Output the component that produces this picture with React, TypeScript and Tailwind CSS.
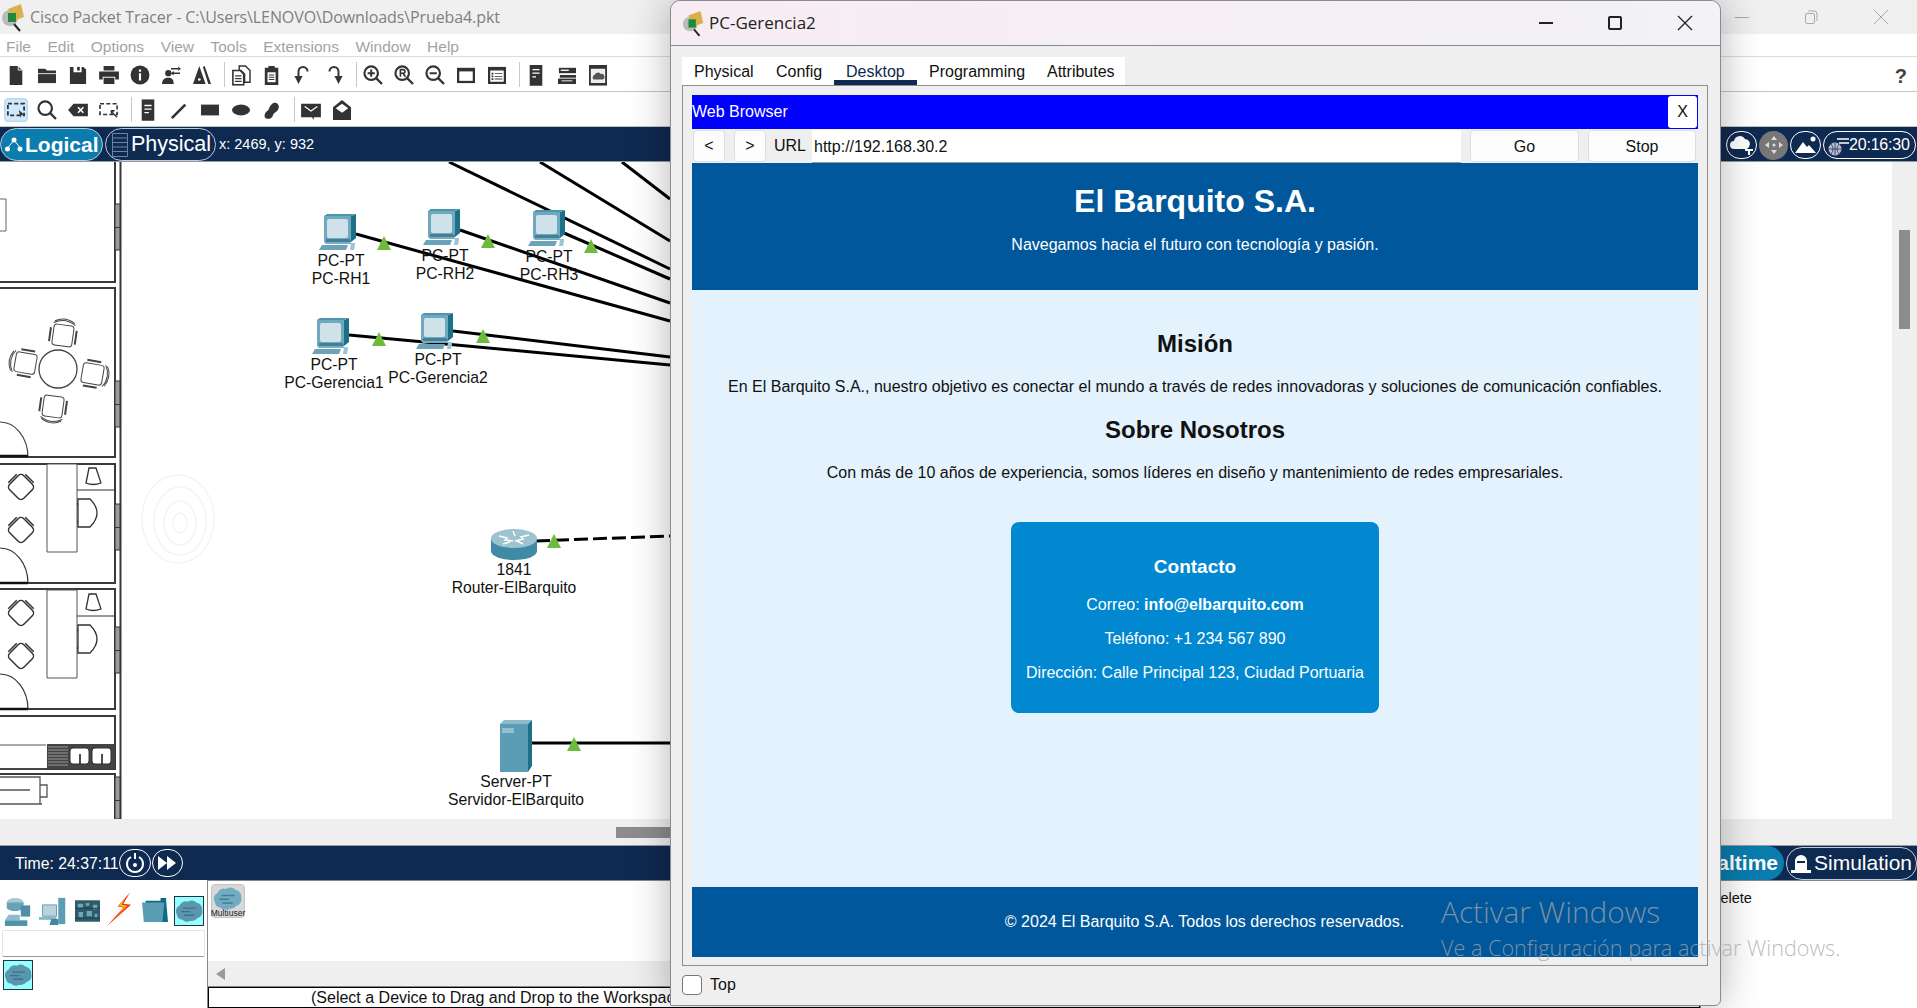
import React from "react";

const D = "#333333";

function Ic({ children, w = 24, h = 24, vb = "0 0 24 24" }: { children: React.ReactNode; w?: number; h?: number; vb?: string }) {
  return (
    <svg width={w} height={h} viewBox={vb} fill={D} className="block">
      {children}
    </svg>
  );
}

const Zoom = ({ inner }: { inner: React.ReactNode }) => (
  <Ic>
    <circle cx="10" cy="10" r="7.5" fill="none" stroke={D} strokeWidth="2.4" />
    <path d="M15.5 15.5 22 22" stroke={D} strokeWidth="2.6" fill="none" />
    {inner}
  </Ic>
);

const toolbar1: React.ReactNode[] = [
  <Ic key="a"><path d="M5 2h9l5 5v16H5z" /><path d="M14.5 2v4.5H19" fill="none" stroke="#fff" strokeWidth="1" /></Ic>,
  <Ic key="b"><path d="M2 5h8l2 2h10v3H2z" /><path d="M2 11h20v10H2z" /></Ic>,
  <Ic key="c"><path d="M3 3h4v6h9V3h2l3 3v16H3z" /><path d="M11 3h3v4h-3z" /></Ic>,
  <Ic key="d"><path d="M6 2h12v5H6z" /><path d="M1 8h22v9h-4v-3H5v3H1z" /><path d="M6 15h12v7H6z" /></Ic>,
  <Ic key="e"><circle cx="12" cy="12" r="10.5" /><path d="M10.8 10h2.4v8h-2.4zM10.8 6h2.4v2.4h-2.4z" fill="#fff" /></Ic>,
  <Ic key="f"><circle cx="9" cy="10" r="3.5" /><path d="M2 22c0-5 3-7 7-7s6 2 6 7z" /><path d="M12 5h8M13 10h9" stroke={D} strokeWidth="1.6" /><path d="M20 2.500 23 5l-3 2.500zM15 7.500 12 10l3 2.500z" /></Ic>,
  <Ic key="g"><path d="M9 2l7 20H2z" /><path d="M13 3l2-1 7 20h-3z" /><circle cx="9" cy="17" r="1.500" fill="#fff" /></Ic>,
  "sep",
  <Ic key="h"><path d="M10 2h7l5 5v13h-6v-9l-4-4h-2z" fill="none" stroke={D} strokeWidth="1.600" /><path d="M3 7h8l4 4v12H3z" fill="#fff" stroke={D} strokeWidth="1.800" /><path d="M5.500 13h7M5.500 16h7M5.500 19h7" stroke={D} strokeWidth="1.400" /></Ic>,
  <Ic key="i"><path d="M4 4h4V2h7v2h4v19H4z" /><path d="M7 9h9v11H7z" fill="#fff" /><path d="M8.500 12h6M8.500 14.500h6M8.500 17h6" stroke={D} strokeWidth="1.300" /></Ic>,
  <Ic key="j"><path d="M7 14V8a5 5 0 0 1 10 0" fill="none" stroke={D} strokeWidth="2.200" /><path d="M2.500 13h9L7 22z" /></Ic>,
  <Ic key="k"><path d="M17 14V8A5 5 0 0 0 7 8" fill="none" stroke={D} strokeWidth="2.200" /><path d="M12.500 13h9L17 22z" /></Ic>,
  "sep",
  <Zoom key="l" inner={<path d="M6 10h8M10 6v8" stroke={D} strokeWidth="2.200" />} />,
  <Zoom key="m" inner={<path d="M8 14V6h3a2 2 0 0 1 0 4H8m3 0 2.500 4" fill="none" stroke={D} strokeWidth="1.800" />} />,
  <Zoom key="n" inner={<path d="M6 10h8" stroke={D} strokeWidth="2.200" />} />,
  <Ic key="o"><path d="M2 4h20v17H2z" /><path d="M4.500 8h15v10.500h-15z" fill="#fff" /></Ic>,
  <Ic key="p"><path d="M2 3h20v19H2z" /><path d="M4.500 7h15v12.500h-15z" fill="#fff" /><path d="M6 9.500h2v2H6zM6 12.500h2v2H6zM6 15.500h2v2H6zM9.500 10h8.500v1H9.500zM9.500 13h8.500v1H9.500zM9.500 16h8.500v1H9.500z" /></Ic>,
  "sep",
  <Ic key="q"><path d="M5 1h14v24H5z" /><path d="M8 6h8M8 10h8M8 14h4" stroke="#fff" strokeWidth="1.400" /></Ic>,
  <Ic key="r"><path d="M3 4h19v6H3z" /><path d="M5 6h9v1.500H5z" fill="#fff" /><path d="M4 12h18v3H4z" /><path d="M2 16h20v6H2z" /><path d="M6 18h12v1H6z" fill="#fff" /></Ic>,
  <Ic key="s"><path d="M2 1h20v23H2z" /><path d="M4 5h16v16H4z" fill="#eee" /><path d="M7 17a3 3 0 0 1 1-5 4 4 0 0 1 7-1 3 3 0 0 1 2 6z" fill="#555" /></Ic>,
];

const toolbar2: React.ReactNode[] = [
  <Ic key="a"><path d="M3 5h18v13H3z" fill="none" stroke={D} strokeWidth="2" strokeDasharray="4.500 2.500" /><path d="M15 12l6 5-3 .5-1 3z" /></Ic>,
  <Zoom key="b" inner={null} />,
  <Ic key="c"><path d="M7 5h16v14H7L1 12z" /><path d="M12 9l6 6M18 9l-6 6" stroke="#fff" strokeWidth="1.800" /></Ic>,
  <Ic key="d"><path d="M2 5h19v12H2z" fill="none" stroke={D} strokeWidth="1.800" strokeDasharray="4.500 2.500" /><path d="M14 13l7 7" stroke={D} strokeWidth="1.600" /><path d="M14 12h5l-5 5z" /></Ic>,
  "sep",
  <Ic key="e"><path d="M5 0h14v25H5z" /><path d="M8 7h8M8 11h8M8 15h5" stroke="#fff" strokeWidth="1.400" /></Ic>,
  <Ic key="f"><path d="M4 21 19 6" stroke={D} strokeWidth="3" fill="none" /></Ic>,
  <Ic key="g"><path d="M2 6h20v12H2z" /></Ic>,
  <Ic key="h"><ellipse cx="12" cy="12" rx="10" ry="6" /></Ic>,
  <Ic key="i"><path d="M4 20c-1-3 1-6 4-8 1-2 2-6 6-8 4-1 7 3 5 7-1 3-5 4-6 7-1 4-7 5-9 2z" /></Ic>,
  "sep",
  <Ic key="j"><path d="M1 5h22v15h-8v3l-2-3H1z" /><path d="M5 8l7 5 7-5" fill="none" stroke="#fff" strokeWidth="1.400" /></Ic>,
  <Ic key="k"><path d="M12 1l10 8v14H2V9z" /><path d="M5 10l7-5 7 5-7 5z" fill="#fff" /></Ic>,
];

function ToolRow({ items, h, selected }: { items: React.ReactNode[]; h: string; selected?: boolean }) {
  return (
    <div className={`flex items-center pl-[3px] pt-[1px] bg-white border-b border-[#c4c4c4] ${h}`}>
      {items.map((it, i) =>
        it === "sep" ? (
          <div key={i} className="w-px h-[25px] bg-[#c8c8c8] mx-[3.5px]" />
        ) : (
          <div
            key={i}
            className={`w-[26px] h-[26px] mr-[5px] flex items-center justify-center scale-90 ${selected && i === 0 ? "bg-[#cfe8fb] border border-[#9cc9ee] rounded-[3px]" : ""}`}
          >
            {it}
          </div>
        )
      )}
    </div>
  );
}

function Pc({ x, y }: { x: number; y: number }) {
  return (
    <svg width="37" height="36" viewBox="0 0 37 36" className="absolute" style={{ left: x, top: y }}>
      <path d="M5 2h27v26H5z" fill="#6fa9bd" />
      <path d="M32 2l5-2v24l-5 4z" fill="#1e6f88" />
      <path d="M5 2 8 0h29l-5 2z" fill="#4d93ab" />
      <rect x="8" y="5" width="21" height="19" rx="2" fill="#cfe1e9" />
      <path d="M7 25h24l1 3H7z" fill="#447f97" />
      <path d="M5 28h26l2 2H7z" fill="#77afc2" />
      <path d="M3 31h26l-2 5H0z" fill="#6ba3b8" />
      <path d="M32 29h4v2l-1 5h-4z" fill="#9cc6d4" />
    </svg>
  );
}

function Label({ cx, y, a, b }: { cx: number; y: number; a: string; b: string }) {
  return (
    <div className="absolute -translate-x-1/2 text-center text-[15.700px] leading-[18px] text-[#111] whitespace-nowrap" style={{ left: cx, top: y }}>
      <div>{a}</div>
      <div>{b}</div>
    </div>
  );
}

const Tri = ({ x, y }: { x: number; y: number }) => <path d={`M${x - 7} ${y + 14}L${x} ${y}L${x + 7} ${y + 14}Z`} fill="#6cbb3c" />;

const Chair = ({ x, y, r }: { x: number; y: number; r: number }) => (
  <g transform={`translate(${x} ${y}) rotate(${r})`} fill="none" stroke="#444" strokeWidth="1">
    <rect x="-10" y="-10" width="20" height="21" rx="3" />
    <path d="M-13 -6v14M13 -6v14" strokeWidth="2" />
    <path d="M-11 -11q11 -7 22 0M-10 -13q10 -6 20 0" strokeWidth="1" />
  </g>
);

function Office({ y }: { y: number }) {
  return (
    <g fill="none" stroke="#333" strokeWidth="1">
      <path d={`M47 ${y}h30v88H47z`} fill="#fff" stroke="#555" />
      <path d={`M77 ${y + 26}h38`} />
      {[23, 66].map((d) => (
        <g key={d} transform={`translate(21 ${y + d}) rotate(45)`}>
          <rect x="-10" y="-10" width="20" height="20" rx="4" strokeWidth="1.500" />
          <path d="M-12 -6v12M-6 -12h12" strokeWidth="1.500" />
        </g>
      ))}
      <path d={`M78 ${y + 35}h12q14 14 0 28H78z`} strokeWidth="1.300" />
      <path d={`M78 ${y + 40}h-1M78 ${y + 58}h-1`} strokeWidth="2" />
      <path d={`M86 ${y + 19}l3-15h7l5 15q-8 3-15 0z`} strokeWidth="1.300" />
      <path d={`M0 ${y + 84}A28 35 0 0 1 28 ${y + 119}`} strokeWidth="1.200" />
      <path d={`M0 ${y + 119}h28`} stroke="#111" strokeWidth="2.500" />
    </g>
  );
}

function FloorPlan() {
  return (
    <svg width="125" height="657" viewBox="0 163 125 657" className="absolute left-0 top-0">
      <g fill="none" stroke="#3a3a3a">
        <path d="M0 283h115V163" strokeWidth="2" />
        <path d="M0 289h115v169H0" strokeWidth="2" />
        <path d="M120.500 163v657" strokeWidth="2" />
        <path d="M0 200h6v32H0" strokeWidth="1" stroke="#666" />
        <path d="M0 465h115v119H0" strokeWidth="2" />
        <path d="M0 590h115v120H0" strokeWidth="2" />
        <path d="M0 717h115v53H0" strokeWidth="2" />
        <path d="M0 775h115v45" strokeWidth="2" />
      </g>
      {[205, 382, 505, 628, 778].map((y, i) => (
        <g key={i}>
          <rect x="115" y={y} width="5" height={i === 4 ? 42 : 46} fill="#9a9a9a" stroke="#333" strokeWidth="1" />
          <rect x="115" y={y + 23} width="5" height="1" fill="#333" />
        </g>
      ))}
      <circle cx="58" cy="370" r="19" fill="none" stroke="#444" strokeWidth="1.300" />
      <Chair x={63} y={336} r={8} />
      <Chair x={25} y={364} r={-80} />
      <Chair x={93} y={375} r={100} />
      <Chair x={53} y={408} r={188} />
      <path d="M0 423A28 35 0 0 1 28 458" fill="none" stroke="#444" strokeWidth="1.200" />
      <path d="M0 457h28" stroke="#111" strokeWidth="2.500" />
      <Office y={465} />
      <Office y={591} />
      <rect x="47" y="745" width="68" height="25" fill="#444" />
      <path d="M48 748h20M48 751h20M48 754h20M48 757h20M48 760h20M48 763h20M48 766h20" stroke="#999" />
      {[70, 92].map((x) => (
        <g key={x}>
          <rect x={x} y="749" width="19" height="16" rx="3" fill="#fff" stroke="#333" />
          <path d={`M${x + 10} 755v10`} stroke="#111" strokeWidth="1.500" />
        </g>
      ))}
      <path d="M0 746h46M0 770h46" stroke="#555" />
      <g fill="none" stroke="#555" strokeWidth="1.300">
        <path d="M0 778h40v27H0M0 791h30M40 786h7v12h-7M0 805h42" />
      </g>
    </svg>
  );
}

function Scene() {
  return (
    <div className="relative flex-1 bg-white overflow-hidden font-['Liberation_Sans',sans-serif]">
      <FloorPlan />
      <svg width="180" height="180" viewBox="0 0 180 180" className="absolute left-[90px] top-[267px]" fill="none" stroke="#f4f4f4" strokeWidth="1.500">
        <ellipse cx="88" cy="90" rx="36" ry="44" />
        <ellipse cx="90" cy="92" rx="26" ry="34" />
        <ellipse cx="90" cy="94" rx="16" ry="22" />
        <ellipse cx="90" cy="94" rx="7" ry="10" />
      </svg>
      <svg width="700" height="657" viewBox="0 163 700 657" className="absolute left-0 top-0" fill="none">
        <g stroke="#000" strokeWidth="3">
          <path d="M449 163 670 270" />
          <path d="M540 163 670 242" />
          <path d="M622 163 670 200" />
          <path d="M564 234 670 280" />
          <path d="M460 231 670 304" />
          <path d="M356 235 670 322" />
          <path d="M349 336 670 366" />
          <path d="M453 332 670 358" />
          <path d="M536 542 670 537" strokeDasharray="14 5" />
          <path d="M531 744H670" />
        </g>
        <Tri x={384} y={237} />
        <Tri x={488} y={235} />
        <Tri x={591} y={240} />
        <Tri x={379} y={333} />
        <Tri x={483} y={330} />
        <Tri x={554} y={535} />
        <Tri x={574} y={738} />
      </svg>
      <div className="absolute left-0 top-[-162px] w-0 h-0">
        <Pc x={319} y={214} />
        <Pc x={423} y={209} />
        <Pc x={528} y={210} />
        <Pc x={312} y={318} />
        <Pc x={416} y={313} />
        <svg width="46" height="31" viewBox="0 0 46 31" className="absolute left-[491px] top-[529px]">
          <path d="M0 9v13c0 5 10 9 23 9s23-4 23-9V9z" fill="#3f8ba5" />
          <ellipse cx="23" cy="9.500" rx="23" ry="9.500" fill="#9dc3d0" />
          <path d="M8 7l8 2-2 2 8 1M38 6l-8 2 2 2-8 2M12 15l7-2M32 15l-6-3M22 2l2 5" stroke="#fff" strokeWidth="1.500" fill="none" />
        </svg>
        <svg width="32" height="52" viewBox="0 0 32 52" className="absolute left-[500px] top-[720px]">
          <path d="M0 4h28v48H0z" fill="#5a9db5" />
          <path d="M0 4l4-4h28l-4 4z" fill="#8cbccb" />
          <path d="M28 4l4-4v46l-4 6z" fill="#1e6f88" />
          <rect x="2" y="8" width="12" height="5" fill="#93bfce" />
        </svg>
        <Label cx={341} y={252} a="PC-PT" b="PC-RH1" />
        <Label cx={445} y={247} a="PC-PT" b="PC-RH2" />
        <Label cx={549} y={248} a="PC-PT" b="PC-RH3" />
        <Label cx={334} y={356} a="PC-PT" b="PC-Gerencia1" />
        <Label cx={438} y={351} a="PC-PT" b="PC-Gerencia2" />
        <Label cx={514} y={561} a="1841" b="Router-ElBarquito" />
        <Label cx={516} y={773} a="Server-PT" b="Servidor-ElBarquito" />
      </div>
    </div>
  );
}

const Cloud = ({ w = 28, light }: { w?: number; light?: boolean }) => (
  <svg width={w} height={w * 0.8} viewBox="0 0 30 24">
    <path d="M4 6a7 7 0 0 1 9-4 8 8 0 0 1 10 1 7 7 0 0 1 6 8 7 7 0 0 1-5 9 8 8 0 0 1-8 3 8 8 0 0 1-9-1 7 7 0 0 1-6-6 7 7 0 0 1 3-10z" fill={light ? "#73abc1" : "#5c96ad"} />
    <path d="M8 9h14M6 13h10M9 17h11" stroke={light ? "#3f7f98" : "#38728a"} strokeWidth="1.500" />
  </svg>
);

function DevicePicker() {
  return (
    <div className="w-[208px] shrink-0 bg-white pt-[4px] border-r border-[#888]">
      <div className="flex items-end h-[45px] pb-[3px] pl-[4px] bg-white">
        <svg width="28" height="30" viewBox="0 0 30 32">
          <ellipse cx="12" cy="7" rx="9" ry="5" fill="#a9c9d5" />
          <path d="M3 7v6c3 4 14 4 18 0V7z" fill="#67a3b8" />
          <path d="M18 10h10v12H18z" fill="#4e90a8" />
          <path d="M5 20h12v6H1z" fill="#8ebccb" />
          <path d="M1 26h24v6H1z" fill="#4f93ab" />
        </svg>
        <svg width="28" height="30" viewBox="0 0 32 34" className="ml-[7px]">
          <path d="M22 2h8v30h-8z" fill="#5d9cb3" />
          <path d="M4 10h16v13H4z" fill="#b9d4de" stroke="#5a94aa" />
          <path d="M0 24h20v3H0z" fill="#7fb2c3" />
          <path d="M14 26h8v7H12z" fill="#3f87a0" />
        </svg>
        <svg width="25" height="24" viewBox="0 0 28 24" className="ml-[8px] mb-[3px]">
          <rect width="28" height="24" fill="#2f5a68" />
          <path d="M3 4h6v4H3zM12 3h4v3h-4zM20 5h5v5h-5zM4 13h5v6H4zM13 12h6v6h-6zM22 15h3v4h-3z" fill="#6ba7bb" />
          <path d="M0 9h28M0 20h28" stroke="#15404e" />
        </svg>
        <svg width="27" height="34" viewBox="0 0 28 35" className="ml-[7px]">
          <path d="M24 0 11 15l6 1L0 35l25-22-8-1z" fill="#f23a0e" />
          <path d="M19 6 12 14.500l6 1L9 26l12-12-6-1z" fill="#fbbf24" />
        </svg>
        <svg width="26" height="26" viewBox="0 0 28 26" className="ml-[8px] mb-[3px]">
          <path d="M4 3h16V0h6v3l2 23H2z" fill="#0f6a84" />
          <path d="M0 5h24l-2 21H2z" fill="#5a9db5" />
        </svg>
        <div className="w-[30px] h-[30px] ml-[6px] bg-[#96ffff] border border-[#234] flex items-center justify-center">
          <Cloud w={27} />
        </div>
      </div>
      <div className="h-[27px] mx-[2px] mt-[1px] bg-white border border-[#e4e4e4] border-b-[#999] rounded-[2px]" />
      <div className="w-[30px] h-[30px] mt-[3px] ml-[3px] bg-[#96ffff] border border-[#234] flex items-center justify-center">
        <Cloud w={27} />
      </div>
    </div>
  );
}

function Background() {
  return (
    <div className="w-[1917px] h-[1008px] flex flex-col bg-[#efefef] font-['Liberation_Sans',sans-serif]">
      <div className="h-[34px] shrink-0 flex items-center bg-[#f0f0f0] relative">
        <svg width="26" height="30" viewBox="0 0 26 30" className="ml-[1px]">
          <circle cx="9" cy="16" r="8" fill="#bbb" />
          <path d="M7 7l13-5 3 13-11 4z" fill="#d9b04a" />
          <path d="M7 11h8v9H7z" fill="#1e8a3c" />
          <path d="M13 22l6 7" stroke="#222" strokeWidth="2" />
        </svg>
        <span className="ml-[3px] text-[16px] text-[#7f7f7f] font-['Open_Sans',sans-serif] tracking-[-0.100px]">{"Cisco Packet Tracer - C:\\Users\\LENOVO\\Downloads\\Prueba4.pkt"}</span>
        <div className="ml-auto flex items-center text-[#a9a9a9] mr-[28px] gap-[54px] text-[20px]">
          <div className="w-[14px] h-px bg-[#a9a9a9]" />
          <svg width="16" height="16" viewBox="0 0 16 16" fill="none" stroke="#a9a9a9"><rect x="2.500" y="4.500" width="9" height="10" rx="1.500" /><path d="M5 2h6a3 3 0 0 1 3 3v7" /></svg>
          <svg width="16" height="16" viewBox="0 0 16 16" stroke="#a9a9a9"><path d="M1 1l14 14M15 1 1 15" /></svg>
        </div>
      </div>
      <div className="h-[23px] shrink-0 flex items-center bg-white pl-[6px] pt-[3px] gap-[16.500px] text-[15.500px] text-[#a3a3a3] border-b border-[#dcdcdc]">
        {["File", "Edit", "Options", "View", "Tools", "Extensions", "Window", "Help"].map((m) => (
          <span key={m}>{m}</span>
        ))}
      </div>
      <div className="relative shrink-0">
        <ToolRow items={toolbar1} h="h-[35px]" />
        <span className="absolute right-[10px] top-[4px] text-[20px] font-bold text-[#444]">?</span>
      </div>
      <ToolRow items={toolbar2} h="h-[36px]" selected />
      <div className="h-[35px] shrink-0 flex items-center pt-[1px] bg-[#0f2a50] text-white border-b border-[#999] relative">
        <div className="h-[33px] w-[103px] rounded-[17px] bg-[#0a7cae] border border-[#bcd] flex items-center pl-[3px] gap-[1px]">
          <svg width="20" height="20" viewBox="0 0 20 20" className="shrink-0">
            <path d="M10 5 3 14M10 5l7 9" stroke="#fff" fill="none" />
            <circle cx="10" cy="5" r="2.500" fill="#fff" />
            <circle cx="3.500" cy="14" r="2.500" fill="#fff" />
            <circle cx="16" cy="14" r="2.500" fill="#fff" />
          </svg>
          <span className="text-[21px] font-bold leading-none">Logical</span>
        </div>
        <div className="h-[33px] w-[111px] ml-[2px] rounded-[17px] border border-[#bcd] flex items-center pl-[6px] gap-[3px]">
          <svg width="16" height="24" viewBox="0 0 16 24" fill="none" stroke="#6d83a3" className="shrink-0">
            <path d="M.500.500h15v23H.500zM.500 5h15M.500 9.500h15M.500 14h15M.500 18.500h15" />
          </svg>
          <span className="text-[21.500px] leading-none">Physical</span>
        </div>
        <span className="ml-[3px] text-[14.500px]">x: 2469, y: 932</span>
        <div className="absolute left-[1726px] top-[1px] h-full flex items-center gap-[2px]">
          <div className="w-[31px] h-[28px] rounded-full border border-white flex items-center justify-center">
            <svg width="24" height="22" viewBox="0 0 24 22" fill="#fff"><path d="M4 15a4 4 0 0 1 0-8 6 6 0 0 1 11-2 5 5 0 0 1 4 8l-2 2z" /><path d="M15 15h8v2h-3v4h-2v-4h-3z" /></svg>
          </div>
          <div className="w-[29px] h-[29px] rounded-full bg-[#777] flex items-center justify-center">
            <svg width="20" height="20" viewBox="0 0 20 20" fill="#ddd"><path d="M10 1l3 4H7zM10 19l3-4H7zM1 10l4-3v6zM19 10l-4-3v6z" /><circle cx="10" cy="10" r="1.500" /></svg>
          </div>
          <div className="w-[31px] h-[28px] rounded-full border border-white flex items-center justify-center">
            <svg width="24" height="20" viewBox="0 0 24 20" fill="#fff"><path d="M1 18 9 7l4 5 2-2 7 8z" /><circle cx="19" cy="4" r="2.500" /></svg>
          </div>
          <div className="w-[93px] h-[28px] rounded-[14px] border border-white flex items-center pl-[3px]">
            <svg width="22" height="24" viewBox="0 0 22 24" fill="none" stroke="#fff" className="shrink-0">
              <circle cx="8" cy="16" r="6.500" fill="#bbc" stroke="none" />
              <path d="M2 16h12M8 10v12M4 11q4 5 0 10M12 11q-4 5 0 10" stroke="#0f2a50" strokeWidth=".700" />
              <path d="M10 6h12M12 10h10" strokeWidth="1.500" />
            </svg>
            <span className="text-[16px] tracking-[-0.200px]">20:16:30</span>
          </div>
        </div>
      </div>
      <div className="h-[657px] shrink-0 flex">
        <Scene />
        <div className="w-[25px] shrink-0 bg-[#efefef] pt-[68px] pl-[7px]">
          <div className="w-[11px] h-[99px] bg-[#8c8c8c]" />
        </div>
      </div>
      <div className="h-[27px] shrink-0 bg-[#efefef] pl-[616px] pt-[8px] border-b border-[#999]">
        <div className="w-[60px] h-[11px] bg-[#8c8c8c]" />
      </div>
      <div className="h-[34px] shrink-0 flex items-center bg-[#0f2a50] text-white relative">
        <span className="ml-[15px] mt-[1px] text-[15.800px]">Time: 24:37:11</span>
        <div className="ml-[0px] w-[32px] h-[28px] rounded-full border border-white flex items-center justify-center">
          <svg width="20" height="22" viewBox="0 0 20 22" fill="none" stroke="#fff" strokeWidth="2"><path d="M6 5a8 8 0 1 0 8 0" /><path d="M10 1v6" /><circle cx="10" cy="13" r="1" fill="#fff" /></svg>
        </div>
        <div className="ml-[1px] w-[31px] h-[28px] rounded-full border border-white flex items-center justify-center">
          <svg width="18" height="14" viewBox="0 0 18 14" fill="#fff"><path d="M0 0l9 7-9 7zM9 0l9 7-9 7z" /></svg>
        </div>
        <div className="ml-auto flex items-center h-[34px] gap-[2px]">
          <div className="w-[110px] h-[34px] rounded-[17px] bg-[#0a7cae] flex items-center justify-end pr-[6px] text-[21px] font-bold">Realtime</div>
          <div className="w-[131px] h-[33px] rounded-[16px] border border-[#bcd] flex items-center pl-[3px] gap-[2px] text-[21px]">
            <svg width="22" height="22" viewBox="0 0 22 22" fill="#fff" className="shrink-0"><path d="M5 9a6 6 0 0 1 12 0v9H5z" /><path d="M7 9h8v2H7z" fill="#0f2a50" /><path d="M1 18h20v3H1z" /></svg>
            Simulation
          </div>
        </div>
      </div>
      <div className="flex-1 flex bg-[#efefef]">
        <DevicePicker />
        <div className="flex-1 flex flex-col border-t border-[#888]">
          <div className="h-[80px] bg-white pt-[3px] pl-[3px]">
            <div className="w-[34px] h-[34px] rounded-[4px] bg-[#d8d8d8] border border-[#c4c4c4] flex flex-col items-center pt-[2px]">
              <Cloud w={30} light />
              <span className="text-[8.500px] leading-none -mt-[1px] text-[#222]">Multiuser</span>
            </div>
          </div>
          <div className="h-[26px] bg-[#efefef] border-b border-[#888] pl-[8px] flex items-center">
            <svg width="9" height="12" viewBox="0 0 9 12" fill="#999"><path d="M9 0v12L0 6z" /></svg>
          </div>
          <div className="flex-1 bg-white border border-black pl-[102px] text-[16px] leading-[19px] text-[#111] whitespace-nowrap overflow-hidden">(Select a Device to Drag and Drop to the Workspace)</div>
        </div>
        <div className="w-[217px] shrink-0 bg-white border-t border-[#888] border-l pl-[9px] pt-[7px] text-[14.500px] text-[#111]">Delete</div>
      </div>
    </div>
  );
}

function Dialog() {
  return (
    <div className="absolute left-[670px] top-0 w-[1051px] h-[1006px] flex flex-col bg-[#efefef] border border-[#8a8a94] rounded-t-[10px] rounded-br-[6px] shadow-[0_0_40px_rgba(0,0,0,0.3)] font-['Liberation_Sans',sans-serif]">
      <div className="h-[45px] shrink-0 flex items-center bg-gradient-to-r from-[#f8ecf3] to-[#f2f2f7] rounded-t-[10px] border-b border-[#8a8a94] pl-[11px] relative">
        <svg width="24" height="30" viewBox="0 0 26 30">
          <circle cx="9" cy="16" r="8" fill="#bbb" />
          <path d="M7 7l13-5 3 13-11 4z" fill="#d9b04a" />
          <path d="M7 11h8v9H7z" fill="#1e8a3c" />
          <path d="M13 22l6 7" stroke="#222" strokeWidth="2" />
        </svg>
        <span className="ml-[3px] text-[17px] text-[#222] font-['Open_Sans',sans-serif]">PC-Gerencia2</span>
        <div className="ml-auto mr-[27px] flex items-center gap-[55px]">
          <div className="w-[14px] h-[1.500px] bg-[#222]" />
          <div className="w-[14px] h-[14px] border-2 border-[#222] rounded-[2px]" />
          <svg width="16" height="16" viewBox="0 0 16 16" stroke="#222" strokeWidth="1.300"><path d="M1 1l14 14M15 1 1 15" /></svg>
        </div>
      </div>
      <div className="mt-[11px] ml-[11px] w-[443px] h-[28px] shrink-0 bg-white flex text-[16px] text-[#111] leading-[29px]">
        <span className="pl-[12px] w-[94px]">Physical</span>
        <span className="w-[58px]">Config</span>
        <span className="w-[83px] h-[28px] pl-[12px] text-[#0f2a50] border-b-[5px] border-[#0f2a50]">Desktop</span>
        <span className="pl-[12px] w-[130px]">Programming</span>
        <span>Attributes</span>
      </div>
      <div className="ml-[11px] w-[1026px] h-[881px] shrink-0 border border-[#8f8f8f] pt-[9px] pl-[9px] pr-[9px] pb-[8px] flex flex-col">
        <div className="h-[34px] shrink-0 bg-[#0000ff] flex items-center justify-between text-[16px] text-white">
          <span>Web Browser</span>
          <div className="w-[29px] h-[32px] mr-[1px] bg-white rounded-[3px] text-[#111] flex items-center justify-center">X</div>
        </div>
        <div className="h-[34px] shrink-0 flex items-center text-[16px] text-[#111]">
          <div className="w-[32px] h-[32px] ml-[1px] bg-[#fdfdfd] border border-[#ddd] rounded-[4px] flex items-center justify-center">&lt;</div>
          <div className="w-[32px] h-[32px] ml-[9px] bg-[#fdfdfd] border border-[#ddd] rounded-[4px] flex items-center justify-center">&gt;</div>
          <span className="w-[46px] pl-[8px]">URL</span>
          <div className="w-[649px] h-[33px] bg-white border-b border-[#999] pl-[2px] pt-[2px] flex items-center">http://192.168.30.2</div>
          <div className="w-[109px] h-[32px] ml-[9px] bg-[#fdfdfd] border border-[#ddd] rounded-[4px] pt-[1px] flex items-center justify-center">Go</div>
          <div className="w-[108px] h-[32px] ml-[9px] bg-[#fdfdfd] border border-[#ddd] rounded-[4px] pt-[1px] flex items-center justify-center">Stop</div>
        </div>
        <div className="flex-1 flex flex-col bg-[#e3f2fd] text-[#111] text-center">
          <header className="h-[127px] shrink-0 bg-[#01579b] text-white pt-[20px]">
            <h1 className="text-[32px] font-bold leading-[37px]">El Barquito S.A.</h1>
            <p className="text-[16px] leading-[18px] mt-[16px]">Navegamos hacia el futuro con tecnología y pasión.</p>
          </header>
          <main className="flex-1 flex flex-col items-center pt-[40px]">
            <h2 className="text-[24px] font-bold leading-[28px]">Misión</h2>
            <p className="text-[16px] leading-[18px] mt-[20px]">En El Barquito S.A., nuestro objetivo es conectar el mundo a través de redes innovadoras y soluciones de comunicación confiables.</p>
            <h2 className="text-[24px] font-bold leading-[28px] mt-[20px]">Sobre Nosotros</h2>
            <p className="text-[16px] leading-[18px] mt-[20px]">Con más de 10 años de experiencia, somos líderes en diseño y mantenimiento de redes empresariales.</p>
            <div className="w-[368px] h-[191px] mt-[40px] rounded-[8px] bg-[#0288d1] text-white pt-[34px]">
              <h3 className="text-[19px] font-bold leading-[22px]">Contacto</h3>
              <p className="text-[16px] leading-[18px] mt-[18px]">
                Correo: <strong>info@elbarquito.com</strong>
              </p>
              <p className="text-[16px] leading-[18px] mt-[16px]">Teléfono: +1 234 567 890</p>
              <p className="text-[16px] leading-[18px] mt-[16px]">Dirección: Calle Principal 123, Ciudad Portuaria</p>
            </div>
          </main>
          <footer className="h-[70px] shrink-0 bg-[#01579b] text-white text-[16px] flex items-center justify-center pl-[19px]">© 2024 El Barquito S.A. Todos los derechos reservados.</footer>
        </div>
      </div>
      <div className="flex-1 flex items-center pl-[11px] pb-[2px] text-[16px] text-[#111] gap-[8px]">
        <div className="w-[20px] h-[20px] bg-white border border-[#777] rounded-[4px]" />
        <span>Top</span>
      </div>
    </div>
  );
}

export default function App() {
  return (
    <div className="relative w-[1917px] h-[1008px] overflow-hidden">
      <Background />
      <Dialog />
      <div className="absolute left-[1441px] top-[893px] font-['Open_Sans',sans-serif] font-light text-[rgba(165,165,165,0.75)] pointer-events-none whitespace-nowrap">
        <div className="text-[29.800px] leading-[38px]">Activar Windows</div>
        <div className="text-[21.600px] leading-[28px] mt-[3px]">Ve a Configuración para activar Windows.</div>
      </div>
    </div>
  );
}
